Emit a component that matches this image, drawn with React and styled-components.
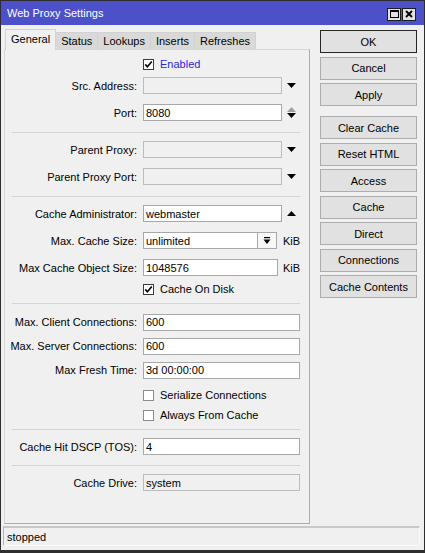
import React from 'react'
import styled, { createGlobalStyle } from 'styled-components'

const GlobalStyle = createGlobalStyle`
  html, body {
    margin: 0;
    padding: 0;
    background: #f0f0f0;
  }
  body {
    font-family: "Liberation Sans", Arial, sans-serif;
    font-size: 11px;
    color: #000;
  }
  * {
    box-sizing: border-box;
  }
`

const Window = styled.div`
  width: 425px;
  height: 553px;
  display: flex;
  flex-direction: column;
  background: #f0f0f0;
  border: 1px solid #2e2e2e;
  border-bottom-width: 3px;
`

const TitleBar = styled.div`
  height: 24px;
  flex: none;
  display: flex;
  align-items: center;
  padding: 0 8px 0 6px;
  background: #4c50c9;
  color: #fff;
  font-size: 11px;
`

const Title = styled.span`
  flex: 1;
`

const TitleButtons = styled.div`
  display: flex;
  gap: 1px;
  margin-top: 2px;
`

const TitleButton = styled.div`
  width: 14px;
  height: 13px;
  display: flex;
  align-items: center;
  justify-content: center;
  background: #e2e2e2;
  border: 1px solid #1e1e1e;
`

const Body = styled.div`
  flex: 1;
  min-height: 0;
  display: flex;
  padding: 4px 0 0 3px;
`

const LeftColumn = styled.div`
  width: 306px;
  display: flex;
  flex-direction: column;
`

const TabStrip = styled.div`
  height: 20px;
  display: flex;
  align-items: flex-end;
  padding-left: 1px;
  position: relative;
  z-index: 1;
`

const Tab = styled.div`
  height: ${p => (p.$active ? '21px' : '17px')};
  margin-bottom: ${p => (p.$active ? '-1px' : '0')};
  padding: ${p => (p.$active ? '0 5px 3px' : '0 5px')};
  display: flex;
  align-items: center;
  background: ${p => (p.$active ? '#f0f0f0' : '#d9d9d9')};
  border: 1px solid #d2d2d2;
  border-bottom: none;
  border-left: ${p => (p.$first ? '1px solid #d2d2d2' : 'none')};
  white-space: nowrap;
`

const Panel = styled.div`
  flex: 1;
  display: flex;
  flex-direction: column;
  padding-top: 6px;
  border: 1px solid;
  border-color: #d6d6d6 #acacac #acacac #d6d6d6;
`

const Row = styled.div`
  height: ${p => p.$h || 27}px;
  margin-top: ${p => p.$top || 0}px;
  display: flex;
  align-items: center;
  flex: none;
`

const CheckRow = styled(Row)`
  padding-left: 138px;
`

const Label = styled.span`
  width: 132px;
  margin-right: 6px;
  flex: none;
  text-align: right;
  white-space: nowrap;
`

const Field = styled.div`
  width: ${p => p.$w}px;
  height: 17px;
  flex: none;
  display: flex;
  align-items: center;
  padding-left: 2px;
  background: ${p => (p.$disabled ? '#f0f0f0' : '#fff')};
  border: 1px solid ${p => (p.$disabled ? '#bcbcbc' : '#a8a8a8')};
  white-space: nowrap;
`

const ArrowSlot = styled.div`
  width: 18px;
  flex: none;
  display: flex;
  flex-direction: column;
  align-items: center;
  justify-content: center;
  gap: 1px;
`

const DropButton = styled.div`
  width: 19px;
  height: 17px;
  flex: none;
  display: flex;
  align-items: center;
  justify-content: center;
  background: #f7f7f7;
  border: 1px solid #a8a8a8;
  border-left: none;
`

const Unit = styled.span`
  margin-left: ${p => p.$gap || 6}px;
`

const Box = styled.span`
  width: 11px;
  height: 11px;
  flex: none;
  display: flex;
  align-items: center;
  justify-content: center;
  background: #fff;
  border: 1px solid ${p => (p.$checked ? '#3a3a3a' : '#8c8c8c')};
`

const CheckText = styled.span`
  margin-left: 6px;
  color: ${p => (p.$accent ? '#2727e6' : '#000')};
`

const Separator = styled.div`
  height: 1px;
  flex: none;
  margin: ${p => p.$top ?? 6}px 9px ${p => p.$bottom ?? 3}px 7px;
  background: #d4d4d4;
`

const RightColumn = styled.div`
  width: 97px;
  margin-left: 10px;
  padding-top: 1px;
  display: flex;
  flex-direction: column;
`

const Button = styled.div`
  height: 23px;
  flex: none;
  display: flex;
  align-items: center;
  justify-content: center;
  margin-bottom: 3.5px;
  margin-top: ${p => (p.$group ? '6.5px' : '0')};
  background: #e1e1e1;
  border: 1px solid ${p => (p.$default ? '#262626' : '#adadad')};
  white-space: nowrap;
`

const StatusBar = styled.div`
  height: 20px;
  flex: none;
  margin: 2px 4px 4px 2px;
  padding-left: 3px;
  display: flex;
  align-items: center;
  border: 1px solid;
  border-top-width: 2px;
  border-color: #c9c9c9 #fafafa #fafafa #b5b5b5;
`

const Down = ({ color = '#000' }) => (
  <svg width="9" height="5" viewBox="0 0 9 5">
    <polygon points="0,0 9,0 4.5,5" fill={color} />
  </svg>
)

const Up = ({ color = '#000' }) => (
  <svg width="9" height="5" viewBox="0 0 9 5">
    <polygon points="0,5 9,5 4.5,0" fill={color} />
  </svg>
)

const Check = ({ checked, children, accent }) => (
  <>
    <Box $checked={checked}>
      {checked && (
        <svg width="9" height="9" viewBox="0 0 9 9">
          <polyline points="1.3,4.4 3.4,6.7 7.8,1.6" fill="none" stroke="#000" strokeWidth="1.6" />
        </svg>
      )}
    </Box>
    <CheckText $accent={accent}>{children}</CheckText>
  </>
)

const tabs = ['General', 'Status', 'Lookups', 'Inserts', 'Refreshes']

const buttons = [
  { text: 'OK', def: true },
  { text: 'Cancel' },
  { text: 'Apply' },
  { text: 'Clear Cache', group: true },
  { text: 'Reset HTML' },
  { text: 'Access' },
  { text: 'Cache' },
  { text: 'Direct' },
  { text: 'Connections' },
  { text: 'Cache Contents' },
]

export default function App() {
  return (
    <>
      <GlobalStyle />
      <Window>
        <TitleBar>
          <Title>Web Proxy Settings</Title>
          <TitleButtons>
            <TitleButton>
              <svg width="9" height="8" viewBox="0 0 9 8">
                <rect x="0.5" y="0.5" width="8" height="7" fill="none" stroke="#000" />
                <rect x="0" y="0" width="9" height="2" fill="#000" />
              </svg>
            </TitleButton>
            <TitleButton>
              <svg width="8" height="8" viewBox="0 0 8 8">
                <path d="M1 1 L7 7 M7 1 L1 7" stroke="#000" strokeWidth="1.8" />
              </svg>
            </TitleButton>
          </TitleButtons>
        </TitleBar>

        <Body>
          <LeftColumn>
            <TabStrip>
              {tabs.map((t, i) => (
                <Tab key={t} $active={i === 0} $first={i === 0}>{t}</Tab>
              ))}
            </TabStrip>
            <Panel>
              <CheckRow $h={16}>
                <Check checked accent>Enabled</Check>
              </CheckRow>
              <Row>
                <Label>Src. Address:</Label>
                <Field $w={139} $disabled />
                <ArrowSlot><Down /></ArrowSlot>
              </Row>
              <Row>
                <Label>Port:</Label>
                <Field $w={139}>8080</Field>
                <ArrowSlot>
                  <Up color="#a0a0a0" />
                  <Down />
                </ArrowSlot>
              </Row>

              <Separator />
              <Row>
                <Label>Parent Proxy:</Label>
                <Field $w={139} $disabled />
                <ArrowSlot><Down /></ArrowSlot>
              </Row>
              <Row>
                <Label>Parent Proxy Port:</Label>
                <Field $w={139} $disabled />
                <ArrowSlot><Down /></ArrowSlot>
              </Row>

              <Separator />
              <Row>
                <Label>Cache Administrator:</Label>
                <Field $w={139}>webmaster</Field>
                <ArrowSlot><Up /></ArrowSlot>
              </Row>
              <Row>
                <Label>Max. Cache Size:</Label>
                <Field $w={115}>unlimited</Field>
                <DropButton>
                  <svg width="8" height="8" viewBox="0 0 8 8">
                    <rect x="1" y="0" width="6" height="1.2" fill="#000" />
                    <polygon points="0.5,2.5 7.5,2.5 4,7" fill="#000" />
                  </svg>
                </DropButton>
                <Unit>KiB</Unit>
              </Row>
              <Row>
                <Label>Max Cache Object Size:</Label>
                <Field $w={135}>1048576</Field>
                <Unit $gap={5}>KiB</Unit>
              </Row>
              <CheckRow $h={16}>
                <Check checked>Cache On Disk</Check>
              </CheckRow>

              <Separator $bottom={6} />
              <Row $h={24}>
                <Label>Max. Client Connections:</Label>
                <Field $w={157}>600</Field>
              </Row>
              <Row $h={24}>
                <Label>Max. Server Connections:</Label>
                <Field $w={157}>600</Field>
              </Row>
              <Row $h={24}>
                <Label>Max Fresh Time:</Label>
                <Field $w={157}>3d 00:00:00</Field>
              </Row>
              <CheckRow $h={20} $top={3}>
                <Check>Serialize Connections</Check>
              </CheckRow>
              <CheckRow $h={20}>
                <Check>Always From Cache</Check>
              </CheckRow>

              <Separator $top={4} />
              <Row>
                <Label>Cache Hit DSCP (TOS):</Label>
                <Field $w={157}>4</Field>
              </Row>

              <Separator $top={5} />
              <Row>
                <Label>Cache Drive:</Label>
                <Field $w={157} $disabled>system</Field>
              </Row>
            </Panel>
          </LeftColumn>

          <RightColumn>
            {buttons.map(b => (
              <Button key={b.text} $default={b.def} $group={b.group}>{b.text}</Button>
            ))}
          </RightColumn>
        </Body>

        <StatusBar>stopped</StatusBar>
      </Window>
    </>
  )
}
